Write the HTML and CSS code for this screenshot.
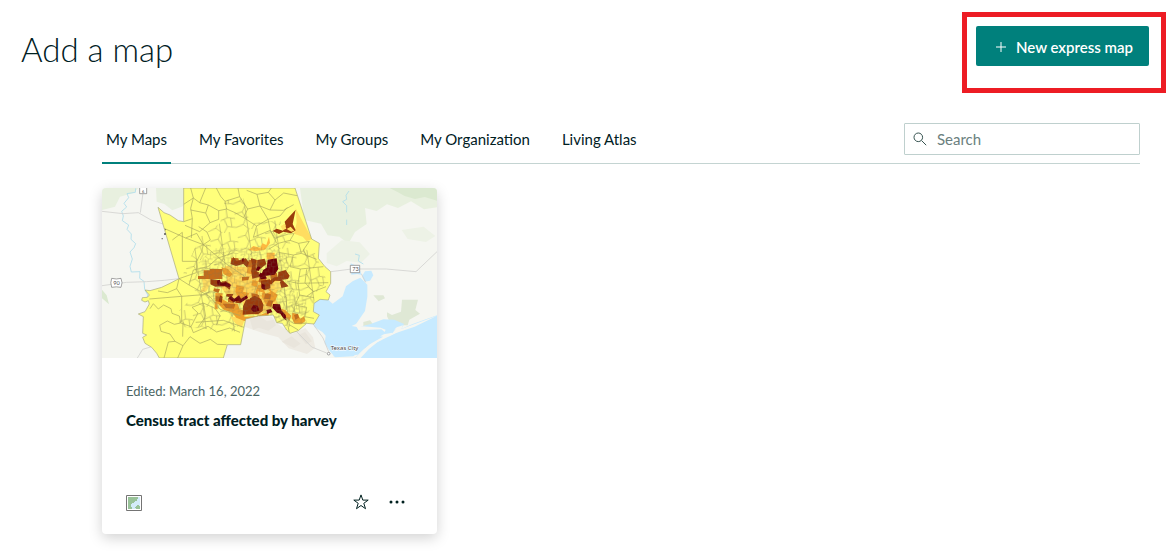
FILE: index.html
```html
<!DOCTYPE html>
<html lang="en">
<head>
<meta charset="utf-8">
<meta name="viewport" content="width=device-width, initial-scale=1">
<title>Add a map</title>
<link rel="stylesheet" href="styles.css">
</head>
<body>
<header class="page-header">
  <h1 class="page-title">Add a map</h1>
  <div class="highlight">
    <button class="primary-button" type="button">
      <svg class="plus-icon" viewBox="0 0 10 10" aria-hidden="true"><path d="M5 0v10M0 5h10"/></svg>
      <span>New express map</span>
    </button>
  </div>
</header>
<main class="content">
  <div class="toolbar">
    <nav class="tabs" aria-label="Map sources">
      <button class="tab tab-active" type="button" aria-current="true">My Maps</button>
      <button class="tab" type="button">My Favorites</button>
      <button class="tab" type="button">My Groups</button>
      <button class="tab" type="button">My Organization</button>
      <button class="tab" type="button">Living Atlas</button>
    </nav>
    <label class="search">
      <svg class="search-icon" viewBox="0 0 16 16" aria-hidden="true"><circle cx="6.3" cy="6.3" r="4.3"/><path d="M9.5 9.5l4.7 4.7"/></svg>
      <input class="search-input" type="search" placeholder="Search" aria-label="Search">
    </label>
  </div>
  <article class="card">
    <svg class="thumbnail" viewBox="36 24 1005 510" role="img" aria-label="Census tract map around Texas City">
      <defs>
        <path id="county" d="M281 24V125L265 122 240 105 222 98 204 82 267 296 240 310 215 322 180 332 165 330 178 345 172 352 157 353 155 361 165 366 175 362 178 372 165 395 145 402 160 410 158 460 170 465 158 472 165 490 185 502 200 520 208 534H400L412 494H452L467 417 505 408 550 405 560 428 577 430 590 450 600 460 625 452 650 430 672 432 688 405 670 395 672 370 690 358 715 360 720 345 708 335 722 310 722 275 705 260 685 235 688 190 665 177 615 24Z"/>
        <clipPath id="county-clip"><use href="#county"/></clipPath>
        <pattern id="fine" width="38" height="34" patternUnits="userSpaceOnUse" patternTransform="rotate(3)">
          <path d="M0 8H17V0M17 8L25 14H38M9 8V23H0M9 23L20 20V34M25 14V27H38M20 20H25M31 0V14M9 34V29H20M31 27V34"/>
        </pattern>
        <pattern id="medium" width="83" height="71" patternUnits="userSpaceOnUse" patternTransform="rotate(-8)">
          <path d="M0 20L24 16 34 0M24 16L32 36 60 27 83 33M60 27V0M32 36L22 54 0 60M22 54L39 71M50 31L57 54 83 60M57 54L45 71M70 30V56M34 0V71"/>
        </pattern>
        <clipPath id="dense"><path d="M325 245L375 205 430 205 540 200 590 225 610 330 650 350 650 430 570 425 460 405 380 385 330 330Z"/></clipPath>
        <clipPath id="suburb"><path d="M330 170L390 130 405 60 460 55 480 130 570 120 600 190 675 220 710 300 680 350 655 400 600 440 460 410 440 455 270 440 260 400 320 340 280 280Z"/></clipPath>
      </defs>
      <path fill="#f5f6f1" d="M36 24h1005v510H36z"/>
      <g fill="#e8f0df">
        <path d="M36 24H145L130 39 90 50 75 80 36 90ZM198 24H281V78L247 91 223 72 200 65ZM630 24H1041V82L1002 88 963 64 924 84 891 73 860 93 825 84 830 132 795 156 775 191 748 170 713 166 693 131 643 120Z"/>
        <path fill="#dbe9d0" d="M899 24H1041V62L1004 51 975 57 944 48 924 37ZM36 329L50 346 57 373 36 355Z"/>
        <path fill="#edf2e6" d="M710 220L755 181 809 187 840 222 813 248 770 243 740 259 710 249ZM935 150l66-10 35 28-28 18-55-9z"/>
        <path fill="#dfe8d5" d="M891 397l15 8 27-10 3-36h48l-8 31 14 11-32 18-5 17h-49l-13-27zM850 346h30l5 9-19 9zM820 426l20-5 9 12-29 5z"/>
      </g>
      <path fill="#eeebe3" d="M460 407L545 410 565 433 608 461 646 444 669 472 676 503 651 522 596 505 565 472 520 460 464 440Z"/>
      <g fill="#e9e5dc"><path d="M480 419l29-10 22 15 20-5 7 17-23 16-29-9-17 7zM575 485l30-16 27 22-20 13zM625 465l20-9 21 28-18 9z"/></g>
      <g fill="#c7eaff">
        <path d="M672 370L690 358 715 360 728 371 758 349 768 319 789 303 811 293 832 314V350L825 393 798 432 785 438 805 442 842 432 880 418 913 419 942 432 934 447 968 432 1041 406V534H793L850 492 937 449 920 450 890 474 856 486 809 514 790 529 735 532 721 515 704 490 707 467 697 456 672 440 672 432 688 405 670 395Z"/>
        <path d="M825 274l19-2 6 14-10 16-16 3-8-16zM782 250l24 10 9 25-13-3-18 2z"/>
      </g>
      <path fill="#f5f6f1" d="M798 437L872 443 887 449 881 463 903 459 920 442 939 436 934 447 1041 407 974 440 918 459 864 485 836 508 812 534H795L839 493 879 470 810 459Z"/>
      <path fill="#c7eaff" d="M805 451l69-3 14 11-30 17-29 24-25 24-73 5 1-58zM897 454l20-7-10 13z"/>
      <g fill="none" stroke="#aeddec" stroke-width="2.5">
        <path d="M137 25l-1 12-25 4 5 12-14 17 8 11-15 13 5 14-3 14 19 13-5 13 13 14-1 16 14 13-5 12-12 13 7 21-7 22 4 17 26-1-1 20 13 9 2 24 9 17-4 21M777 33l-9 13 2 12-12 7 12 12v20M770 119v16M795 222l13 4-3 17 15 9"/>
      </g>
      <g fill="none" stroke="#d2d3d0" stroke-width="2.5">
        <path d="M36 94L99 101 145 98 183 120 219 132M159 39L151 98M36 317L110 307 170 305 223 301 267 296M723 275L785 267 889 267 978 275 1041 215M814 281L827 307M620 455L665 501 710 519M668 430L699 474 716 515M142 534l16-26 24-7"/>
      </g>
      <use href="#county" fill="#ffff7b"/>
      <g clip-path="url(#county-clip)">
        <g clip-path="url(#suburb)" opacity=".75"><path fill="url(#medium)" d="M240 24h490v440H240z"/></g>
        <g fill="#fdb940">
          <path fill="#ffdd60" d="M617 85L666 177 650 184 638 170 612 161 620 128ZM420 410H467L455 443 438 432ZM336 297H361L358 318 349 334 328 338 340 318Z"/>
          <path d="M537 170l-8 25-12-5-6 13-21-5-14 12 22 3 27-4 15-20zM530 218h24v20h-24z"/>
          <path opacity=".6" d="M405 258l70 4 45 20 45 15 8 20-20 30 12 28-58 30-40-5-12-40-42-10-20-30 18-22z"/>
        </g>
        <g fill="#ee9f2c">
          <path d="M394 262l20 5 14 16-9 8-18-8zM439 315l24 5-4 15 18 4-8 20-24-6-9-18zM474 258l14 6-3 19-15-4zM488 300l16 4-3 17-17-5zM376 339l22 1-2 17 18 10 29 4 6 17 15 4-2 18 38-1 35-14 1 14-40 12-33 2-24-10-14-16-24-8-25-26zM374 366h9v22h-9zM504 316l29-8 11 24 19 12-8 20-27 10-14-27-18-9zM550 380l34 9 20 18-6 15-24-20zM607 398l16 5 8 13 12-8 3 15-12 10-20-1-8-17z"/>
        </g>
        <g fill="#c56c1b">
          <path d="M360 267H397V297H324V288H341V271H360ZM424 233l21 2 4 14-27-2zM476 240h27l-4 26-27-6zM456 291l22-1-3 10-19 2zM372 325l18 3-5 11-15-6zM396 304l23 5 2 12-25-5zM377 348l18 3 1 17-19-5zM398 371l38 1-4 14-24-2zM414 356h22l-4 14-18-4zM484 340l22 2 4 16-24-4zM510 289l20 2-5 22-20-8zM526 340l17 3-2 15-19-2zM536 361l14 2-6 18-16-4zM612 405l12-4 3 12-11 6zM540 282l20-4 5 18-21 10z"/>
        </g>
        <g fill="#9b3c0d">
          <path d="M617 89L608 132 617 151 603 160 580 155 567 162 548 153 560 146 579 152 587 137 584 125 599 109ZM430 231l10 12 27-8 10 12-5 16-12-11-22 6-17-6zM482 235l17 4-3 23 8 8-7 9-13-9 3-14zM502 240l22-4 5 16-19 16-9-11zM361 297l18 2 12 8 17-4 9 10 8 9-6 7-14-10-29 1-15-7zM468 359l24-4 20 9 8 11-2 18-13 9-47 2 1-25zM565 276l22-6 12 17-5 10-18 2 20 20-22 5-11-7 9-14-17-1-12 12-8-9 18-13 11-1zM483 271l23 5 2 15-21 5zM513 302l27-4 1 26-17 8-11-10zM390 346l8 4-3 18-9-4zM440 360l18-2-5 12-18-2zM410 342h20l-5 11-17-4zM480 355l14-8 19 10 8 19-14 19-27-10z"/>
        </g>
        <g fill="#6d0009">
          <path d="M533 239l27-4 5 32-11 17-29 4-11-4 5-13 11-8zM511 278l14 4 5 14-18 2-6-12zM549 372l21 1 4 18 13 14 3 17-10-7-9-14-10-3-14-15zM491 374l13 4 4 14-17 5-9-10zM529 390l13-3 5 9-15 6zM414 355l9-7 10 8 14-10 6 10 17-10 4 8-20 13-10-5-14 4zM381 301l8-2 5 11 14-3 16 8-6 6-18-4-18-1zM501 259l11 2-5 12-9-3zM455 236l7-2-3 14zM516 312l10 2-1 13-10-1z"/>
        </g>
        <g fill="#ffe163"><path d="M572 139l12-8 5 15-11 5zM590 147l12-7 11 12-9 3zM458 275l14 5-3 10-13-3zM430 281l19 3-3 14-19-4zM503 334l15 3-3 10-12-3zM552 307l17-3 7 26-22-2zM450 306l20 4-6 9-18-4zM522 331l12-3 7 8-14 5zM422 317l14 5-4 12-13-4z"/></g>
        <g clip-path="url(#dense)" opacity=".5"><path fill="url(#fine)" d="M320 180h340v260H320z"/></g>
        <g class="tracts">
          <path d="M281 73L310 54 302 24M281 125L307 116 302 85 310 54 329 68 347 24M307 116L304 174M302 90L347 99 355 75 329 68M355 75L386 92 410 87 405 64 392 49 379 24M347 99L360 128 386 118 386 92M360 128L329 155 285 136M405 64L449 50 444 24M449 50L473 87 461 113 435 98 410 87M473 87L510 78 501 43 470 31M510 78L534 118 500 138 461 113M501 43L535 37 555 60 540 90 510 78M535 37L544 24M555 60L581 39 621 47M540 90L580 91 611 74M534 118L570 108 592 82M500 138L490 172 541 151 555 175 595 162 612 161M541 151L534 118"/>
          <path d="M222 145L287 174 340 194 405 249 465 290M247 180L277 157V244L320 244 319 278 267 296 297 315 360 350M287 174L320 160 340 194 361 180 351 156 326 140M320 244L335 215 340 194M267 296L260 326 275 349 340 344 361 334M178 357L275 349V427M260 326L232 338 204 333M205 319L231 295M360 350L391 389 452 407M297 315L310 270 354 260 382 235 431 218"/>
          <path d="M180 386L190 371 205 387 221 375 243 386 246 400 268 408 272 429 253 433 232 423 209 436 213 454 240 462 255 484 279 497 300 470 330 490 361 478 382 493 410 494M255 484L235 486 222 534M279 497L263 534M279 427L278 470M272 429L303 440 310 458 354 439 380 456 419 444 450 457M303 440L324 399 306 382 340 369 375 385 390 406 379 435M317 427L400 421 462 442M340 369L347 410 325 440"/>
          <path d="M612 161L600 181 626 190 658 184M600 181L565 190 536 208M626 190L634 220 680 238M634 220L610 225 565 217M610 225L600 260 631 267 700 260M631 267L624 310 590 303M624 310L715 308M650 268L645 308 670 335 708 320M624 310L629 345 672 353M670 335L650 349M629 345L615 375 650 382M590 350L589 390M615 375L610 397M650 382L644 410 672 415M560 428L590 415 610 430 650 430M596 433L625 450M590 415L598 459M540 150L560 190M658 184L640 210 650 229"/>
        </g>
      </g>
      <use href="#county" fill="none" stroke="#a6a77b" stroke-width="2"/>
      <path class="map-mark" d="M222 162h6M215 176h3M225 149h2"/>
      <g class="shields">
        <path d="M149 20h21v21h-21zM65 295q14 4 28 0 6 13 0 27-14-3-28 0-5-14 0-27zM781 256h28v22h-28z"/>
        <text class="shield-small" x="156" y="38">6</text><text x="70" y="315">90</text><text x="787" y="272">73</text>
      </g>
      <circle class="city-dot" cx="716" cy="521" r="4"/>
      <text class="city" x="722" y="511">Texas City</text>
    </svg>
    <div class="card-body">
      <p class="edited">Edited: March 16, 2022</p>
      <h2 class="card-title">Census tract affected by harvey</h2>
      <footer class="card-footer">
        <svg class="map-icon" viewBox="0 0 16 16" role="img" aria-label="Web map">
          <path fill="#fff" stroke="#747474" d="M.5.5h15v15H.5z"/>
          <path fill="#d3ecfa" d="M2 2h12v12H2z"/>
          <path fill="#98c298" d="M2 2h10v2h-1v2H9v1H8v1H6v1H5v3h1v2H2zM10 11h1v-1h2v1h1v3h-4v-1H9v-1h1z"/>
        </svg>
        <div class="actions">
          <button class="icon-button" type="button" aria-label="Add to favorites"><svg class="icon" viewBox="0 0 16 16"><path class="star" d="M8 .9l1.8 5.2h5.4l-4.4 3.2 1.7 5.4L8 11.5l-4.5 3.2 1.7-5.4L.8 6.1h5.4z"/></svg></button>
          <button class="icon-button" type="button" aria-label="More options"><svg class="icon" viewBox="0 0 16 16"><circle cx="2" cy="8" r="1.5"/><circle cx="8" cy="8" r="1.5"/><circle cx="14" cy="8" r="1.5"/></svg></button>
        </div>
      </footer>
    </div>
  </article>
</main>
</body>
</html>
```
FILE: styles.css
```css
* { box-sizing: border-box; }
body {
  margin: 0;
  background: #fff;
  color: #00201f;
  font-family: Lato, "Open Sans", sans-serif;
  font-size: 15px;
}
button, input { font: inherit; color: inherit; }
button { cursor: pointer; }

.page-header {
  display: flex;
  justify-content: space-between;
  align-items: flex-start;
  padding: 12px 9px 0 21px;
}
.page-title {
  margin: 16px 0 0;
  font-size: 33px;
  line-height: 42px;
  font-weight: 300;
}
.highlight {
  padding: 9px 12px 22px 9px;
  border: 5px solid #ed1c24;
}
.primary-button {
  display: flex;
  align-items: center;
  gap: 10px;
  height: 40px;
  padding: 2px 16px 0 20px;
  border: 0;
  border-radius: 2px;
  background: #00807c;
  color: #fff;
  font-weight: 600;
}
.plus-icon { width: 10px; height: 10px; fill: none; stroke: #fff; }

.content { padding: 22px 35px 22px 102px; }
.toolbar {
  display: flex;
  justify-content: space-between;
  align-items: flex-start;
  padding-top: 8px;
  border-bottom: 1px solid #c4d4d2;
}
.tabs { display: flex; gap: 24px; margin-bottom: -1px; }
.tab {
  height: 41px;
  padding: 0 4px 8px;
  border: 0;
  border-bottom: 2px solid transparent;
  background: none;
}
.tab-active { border-bottom-color: #00807c; }
.search {
  display: flex;
  align-items: center;
  gap: 9px;
  width: 236px;
  height: 32px;
  padding: 0 7px;
  border: 1px solid #bfd0ce;
  border-radius: 1px;
}
.search-icon { flex: none; width: 16px; height: 16px; fill: none; stroke: #35524f; }
.search-input {
  flex: 1;
  min-width: 0;
  padding: 0;
  border: 0;
  outline: 0;
  background: none;
}
.search-input::placeholder { color: #6b807e; opacity: 1; }

.card {
  width: 335px;
  margin-top: 24px;
  overflow: hidden;
  border-radius: 4px;
  background: #fff;
  box-shadow: 0 4px 14px rgba(0, 0, 0, 0.18);
}
.thumbnail { display: block; width: 100%; }
.thumbnail pattern path { fill: none; stroke: #777252; stroke-width: 1.5; }
.tracts { fill: none; stroke: #a9a85e; stroke-width: 2; }
.map-mark { fill: none; stroke: #555; stroke-width: 4; }
.shields path { fill: #fff; stroke: #777; stroke-width: 2; }
.shields text { fill: #555; font-size: 17px; }
.shields .shield-small { font-size: 12px; }
.city { fill: #444; stroke: #fff; stroke-width: 3; paint-order: stroke; font: 18px "Noto Sans", sans-serif; }
.city-dot { fill: #fff; stroke: #777; stroke-width: 2; }

.card-body { padding: 24px 24px 22px; }
.edited { margin: 0; color: #4a6563; font-size: 13px; line-height: 18px; }
.card-title { margin: 10px 0 0; font-size: 15px; line-height: 20px; font-weight: 900; }
.card-footer {
  display: flex;
  justify-content: space-between;
  align-items: center;
  margin-top: 62px;
}
.map-icon { width: 16px; height: 16px; margin-top: 2px; }
.actions { display: flex; gap: 4px; }
.icon-button {
  display: flex;
  align-items: center;
  justify-content: center;
  width: 32px;
  height: 20px;
  padding: 0;
  border: 0;
  background: none;
}
.icon { width: 16px; height: 16px; fill: #00201f; }
.star { fill: none; stroke: #00201f; }
```
